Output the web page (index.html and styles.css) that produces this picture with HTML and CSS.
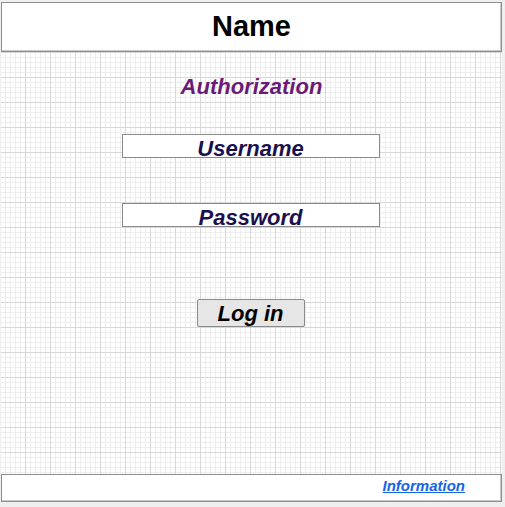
FILE: index.html
```html
<!DOCTYPE html>
<html>
<head>
<meta charset="utf-8">
<title>Authorization</title>
<link rel="stylesheet" href="styles.css">
</head>
<body>
<div class="frame">
  <header class="top-bar">Name</header>
  <main class="canvas">
    <h2 class="auth-title">Authorization</h2>
    <div class="field field-user">Username</div>
    <div class="field field-pass">Password</div>
    <button class="login-btn" type="button">Log in</button>
  </main>
  <footer class="bottom-bar">
    <a class="info-link" href="#">Information</a>
  </footer>
</div>
</body>
</html>
```

FILE: styles.css
```css
html, body {
  margin: 0;
  padding: 0;
}
body {
  background: #efefef;
  font-family: "Liberation Sans", Arial, sans-serif;
  width: 505px;
  height: 507px;
  overflow: hidden;
}
.frame {
  margin: 2px 0 0 1px;
  width: 501px;
  height: 500px;
  display: flex;
  flex-direction: column;
  background-color: #ffffff;
  background-image:
    linear-gradient(to right, #d8d8d8 1px, transparent 1px),
    linear-gradient(to bottom, #d8d8d8 1px, transparent 1px),
    linear-gradient(to right, #ededed 1px, transparent 1px),
    linear-gradient(to bottom, #ededed 1px, transparent 1px);
  background-size: 25px 25px, 25px 25px, 5px 5px, 5px 5px;
  background-position: -1px 0, -1px 0, -1px 0, -1px 0;
}
.top-bar {
  box-sizing: border-box;
  height: 50px;
  background: #ffffff;
  border: 1px solid #8e8e8e;
  box-shadow: inset -1px -1px 0 #c9c9c9;
  text-align: center;
  font-weight: bold;
  font-size: 29px;
  line-height: 46px;
  color: #000;
}
.canvas {
  flex: 1;
  display: flex;
  flex-direction: column;
  align-items: center;
}
.auth-title {
  margin: 22px 0 0 0;
  font-size: 22px;
  line-height: 26px;
  font-style: italic;
  font-weight: bold;
  color: #6a1b78;
}
.field {
  box-sizing: border-box;
  width: 258px;
  height: 24px;
  margin-right: 2px;
  background: #fff;
  border: 1px solid #8a8a8a;
  text-align: center;
  font-size: 22px;
  line-height: 22px;
  padding-top: 3px;
  font-style: italic;
  font-weight: bold;
  color: #1b104f;
  overflow: visible;
  white-space: nowrap;
}
.field-user {
  margin-top: 34px;
}
.field-pass {
  margin-top: 45px;
}
.login-btn {
  box-sizing: border-box;
  margin-top: 72px;
  margin-right: 2px;
  width: 108px;
  height: 28px;
  padding: 0;
  background: #e6e6e6;
  border: 1px solid #8a8a8a;
  border-radius: 2px;
  font-family: "Liberation Sans", Arial, sans-serif;
  font-size: 22px;
  line-height: 28px;
  font-style: italic;
  font-weight: bold;
  color: #000;
}
.bottom-bar {
  box-sizing: border-box;
  height: 28px;
  background: #fff;
  border: 1px solid #8e8e8e;
  box-shadow: inset -1px -1px 0 #c9c9c9;
  text-align: right;
  padding-right: 36px;
  line-height: 22px;
}
.info-link {
  font-size: 15px;
  font-style: italic;
  font-weight: bold;
  color: #1565e8;
  text-decoration: underline;
}
```
